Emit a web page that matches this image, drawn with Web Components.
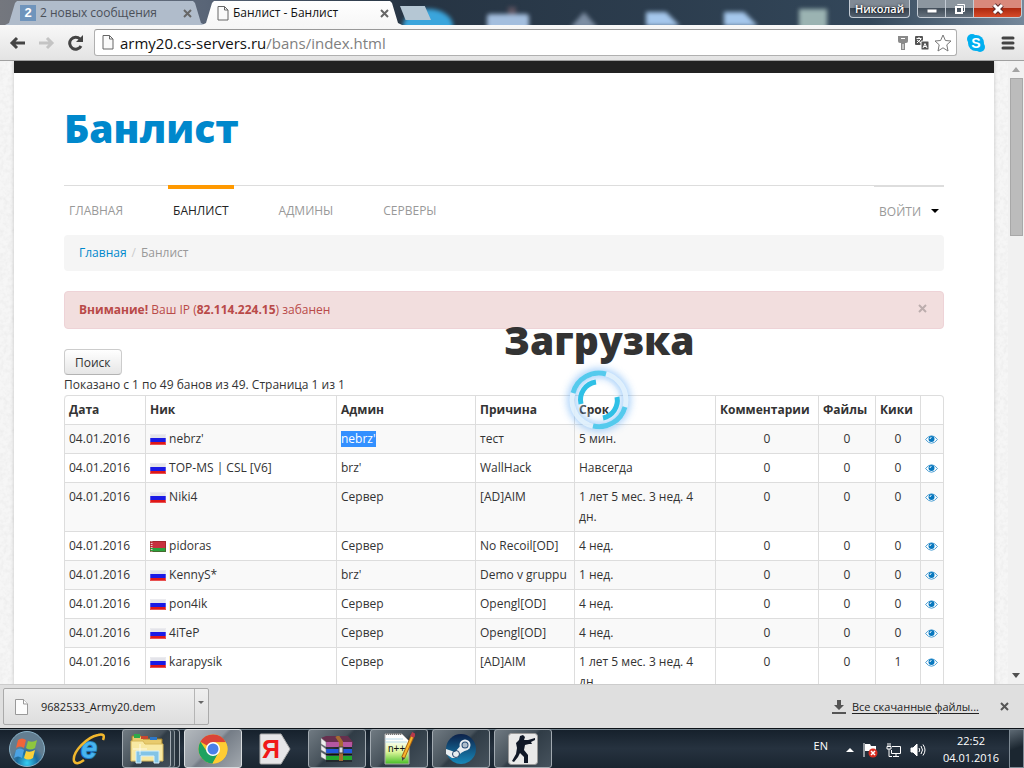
<!DOCTYPE html>
<html lang="ru">
<head>
<meta charset="utf-8">
<title>Банлист - Банлист</title>
<style>
    html, body { height: 100%; margin: 0; }
    body { font: 12px/20px "Open Sans", "Noto Sans", sans-serif; color: #333; overflow: hidden; }
</style>
</head>
<body>
<browser-window>
    <window-tabs slot="tabs">
        <browser-tab name="2 новых сообщения" icon="two"></browser-tab>
        <browser-tab name="Банлист - Банлист" icon="page" active></browser-tab>
    </window-tabs>
    <address-bar slot="bar" host="army20.cs-servers.ru" path="/bans/index.html"></address-bar>
    <scroll-view slot="view">
        <site-page>
            <site-header slot="header">Банлист</site-header>
            <site-nav slot="nav"></site-nav>
            <bread-crumbs slot="crumbs"></bread-crumbs>
            <site-alert slot="alert"><b>Внимание!</b> Ваш IP (<b>82.114.224.15</b>) забанен</site-alert>
            <ban-table></ban-table>
            <loading-box slot="loading">Загрузка</loading-box>
        </site-page>
    </scroll-view>
    <download-bar slot="downloads" file="9682533_Army20.dem"></download-bar>
    <task-bar slot="taskbar"></task-bar>
</browser-window>

<script>
const base = `
    :host, * { box-sizing: border-box; }
    button { font: inherit; color: inherit; background: none; border: 0; padding: 0; margin: 0; }
    a { color: #0088cc; text-decoration: none; }
    svg { display: block; flex: none; }
`;

// Registriert ein Element mit Template im Shadow Root
function define(name, html, setup){
    const template = document.createElement('template');
    customElements.define(name, class extends HTMLElement {
        constructor() {
            super();
            this._isInitialized = false;
        }

        connectedCallback(){
            if(this._isInitialized) return;
            this._isInitialized = true;
            template.innerHTML = html;
            let shadow = this.attachShadow({mode: "open"});
            shadow.append(template.content.cloneNode(true));
            let style = document.createElement('style');
            style.textContent = base;
            shadow.prepend(style);
            if(setup) setup(this, shadow);
        }
    });
}

const pageIcon = `
    <svg width="12" height="15" viewBox="0 0 12 15" fill="#fafafa" stroke="#666">
        <path d="M1 .5H7.500L11 4V14H1Z"/><path d="M7.500 .5V4H11" fill="none"/>
    </svg>`;
const closeIcon = `
    <svg width="9" height="9" viewBox="0 0 9 9" stroke="currentColor" stroke-width="2"><path d="M1 1 8 8M8 1 1 8"/></svg>`;

define('browser-window', `
    <style>
        :host { display: flex; flex-direction: column; height: 100vh; }
        main { flex: 1; min-height: 0; display: flex; background: #fff; }
    </style>
    <slot name="tabs"></slot>
    <slot name="bar"></slot>
    <main><slot name="view"></slot></main>
    <slot name="downloads"></slot>
    <slot name="taskbar"></slot>
`);

define('window-tabs', `
    <style>
        :host {
            display: flex; flex: none; height: 25px; padding-left: 5px; position: relative; z-index: 0; overflow: hidden;
            background: linear-gradient(90deg, #74777e, #596577 20%, #263443 40%, #2c3d4e 65%, #33475a 85%, #75889b);
        }
        .glass { position: absolute; z-index: -1; top: 0; left: 390px; }
        .new { width: 31px; height: 14px; margin-top: 6px; margin-left: 1px; background: #b5c7d4; clip-path: polygon(0 0, 80% 0, 100% 100%, 18% 100%); }
        .space { flex: 1; }
        .user { width: 61px; height: 18px; font-size: 11px; line-height: 17px; font-weight: 600; color: #fff; text-shadow: 0 0 3px #000; border: 1px solid #c3cbd4; border-top: 0; border-radius: 0 0 4px 4px; background: linear-gradient(#808a95 45%, #35414e 50%, #53606e); }
        .controls { display: flex; height: 18px; margin: 0 2px 0 7px; border: 1px solid #c3cbd4; border-top: 0; border-radius: 0 0 4px 4px; overflow: hidden; }
        .controls button { width: 28px; display: flex; align-items: center; justify-content: center; background: linear-gradient(#8c969f 45%, #414d59 50%, #65717d); border-right: 1px solid #c3cbd4; }
        .controls .close { width: 47px; border: 0; background: linear-gradient(#d9897b 45%, #ae2a10 50%, #d64a28); }
    </style>
    <svg class="glass" width="450" height="25" style="--b: blur(2px)">
        <g style="filter: var(--b)">
            <ellipse cx="38" cy="26" rx="25" ry="17" fill="#3aa5dc"/>
            <rect x="97" y="14" width="42" height="16" rx="3" fill="#a3bede"/>
            <rect x="118" y="7" width="8" height="7" fill="#5d5360"/>
            <path d="M180 28 194 12 208 28Z" fill="#7d8ea3"/>
            <path d="M256 12H276L290 26H256Z" fill="#a5c7ec"/>
            <path d="M334 12H354L368 26H334Z" fill="#a5c7ec"/>
            <rect x="409" y="9" width="28" height="20" fill="#9bb3b2"/>
        </g>
    </svg>
    <slot></slot>
    <button class="new" aria-label="Новая вкладка"></button>
    <span class="space"></span>
    <button class="user">Николай</button>
    <div class="controls">
        <button aria-label="Свернуть"><svg width="12" height="12"><rect x="1" y="6" width="10" height="4" fill="#fff" stroke="#4b5560"/></svg></button>
        <button aria-label="Развернуть"><svg width="12" height="12" fill="none" stroke="#fff"><path d="M3.500 2V1.500H10.500V8.500H9" /><rect x="2" y="4" width="6" height="6" stroke-width="2"/></svg></button>
        <button class="close" aria-label="Закрыть"><svg width="14" height="12"><path d="M3 2 11 10M11 2 3 10" stroke="#5b2b2b" stroke-width="5"/><path d="M3 2 11 10M11 2 3 10" stroke="#fff" stroke-width="3"/></svg></button>
    </div>
`);

define('browser-tab', `
    <style>
        :host { display: block; width: 200px; height: 25px; margin-right: -3px; padding-top: 1px; font-size: 12px; color: #4b5059; }
        .tab { height: 24px; display: flex; align-items: center; gap: 4px; padding: 0 13px 0 15px; background: #b0bccb; clip-path: polygon(0 100%, 2% 92%, 5% 8%, 6% 0, 94% 0, 95% 8%, 98% 92%, 100% 100%); }
        :host([active]) { color: #111; position: relative; }
        :host([active]) .tab { background: linear-gradient(#fff, #f7f7f7); }
        .name { flex: 1; white-space: nowrap; overflow: hidden; }
        .two { width: 16px; height: 16px; background: #6f94bc; color: #fff; font: bold 13px/16px "Liberation Sans", sans-serif; text-align: center; }
        button { color: #666; }
    </style>
    <div class="tab"><span class="icon"></span><span class="name"></span><button aria-label="Закрыть вкладку">${closeIcon}</button></div>
`, (el, shadow) => {
    shadow.querySelector('.name').textContent = el.getAttribute('name');
    shadow.querySelector('.icon').innerHTML = el.getAttribute('icon') == 'two' ? '<div class="two">2</div>' : pageIcon;
});

define('address-bar', `
    <style>
        :host { display: flex; align-items: center; flex: none; height: 36px; padding: 0 8px; background: linear-gradient(#f8f8f8, #e3e3e3); border-bottom: 1px solid #a0a0a0; }
        .nav { display: flex; gap: 12px; margin-right: 10px; }
        .field { flex: 1; height: 27px; display: flex; align-items: center; gap: 4px; padding: 0 4px 0 7px; background: #fff; border: 1px solid #b0b0b0; border-top-color: #999; border-radius: 3px; font-size: 15px; }
        .url { flex: 1; margin-left: 2px; color: #111; white-space: nowrap; }
        .url b { font-weight: 400; }
        .url span { color: #808080; }
        .skype { margin: 0 14px 0 9px; }
    </style>
    <div class="nav">
        <button aria-label="Назад"><svg width="18" height="18" fill="none" stroke="#444" stroke-width="3"><path d="M17 9H4M9 4 4 9 9 14"/></svg></button>
        <button aria-label="Вперёд"><svg width="18" height="18" fill="none" stroke="#c4c4c4" stroke-width="3"><path d="M1 9H14M9 4 14 9 9 14"/></svg></button>
        <button aria-label="Обновить"><svg width="16" height="18" fill="none" stroke="#444" stroke-width="3"><path d="M13 12A6 6 0 1 1 12 5"/><path d="M15 1V8H8Z" fill="#444" stroke="none"/></svg></button>
    </div>
    <div class="field">
        ${pageIcon}
        <span class="url"><b></b><span></span></span>
        <svg width="14" height="16"><path d="M2 1H12V6Q12 8 10 8H4Q2 8 2 6Z" fill="#8a8a8a"/><path d="M5 3.500H9" stroke="#fff"/><path d="M7 8V15" stroke="#8a8a8a" stroke-width="4"/><path d="M7 9V14" stroke="#fff"/></svg>
        <svg width="16" height="16" fill="none"><rect x="1" y="1" width="8" height="9" rx="1" fill="#555"/><rect x="7" y="6" width="8" height="9" rx="1" fill="#555" stroke="#fff"/><path d="M2.500 3.500H7.500M5 2V4M3 8 7 4M3 5 7 8M9 13 11 8.500 13 13M10 11.500H12" stroke="#fff"/></svg>
        <svg width="18" height="18" viewBox="0 0 18 18"><path d="M9 1 11.400 6.500 17 7 12.800 10.800 14 17 9 13.800 4 17 5.200 10.800 1 7 6.600 6.500Z" fill="#fff" stroke="#777"/></svg>
    </div>
    <button class="skype" aria-label="Skype"><svg width="20" height="20"><circle cx="10" cy="10" r="8" fill="#00aff0"/><circle cx="6" cy="6" r="5" fill="#00aff0"/><circle cx="14" cy="14" r="5" fill="#00aff0"/><text x="10" y="15" text-anchor="middle" font-family="Liberation Sans" font-weight="bold" font-size="14" fill="#fff">S</text></svg></button>
    <button aria-label="Меню"><svg width="16" height="14" stroke="#444" stroke-width="3" stroke-linecap="round"><path d="M3 2H13M3 7H13M3 12H13"/></svg></button>
`, (el, shadow) => {
    shadow.querySelector('.url b').textContent = el.getAttribute('host');
    shadow.querySelector('.url span').textContent = el.getAttribute('path');
});

define('scroll-view', `
    <style>
        :host { flex: 1; display: flex; min-width: 0; }
        .content { flex: 1; min-width: 0; overflow: hidden; background: #f6f6f6 url('data:image/svg+xml,<svg xmlns="http://www.w3.org/2000/svg" width="200" height="200"><filter id="n"><feTurbulence type="fractalNoise" baseFrequency=".25" numOctaves="3" stitchTiles="stitch"/><feColorMatrix values="0 0 0 0 .8 0 0 0 0 .8 0 0 0 0 .8 1.200 0 0 0 -.45"/></filter><rect width="200" height="200" filter="url(%23n)"/></svg>'); }
        .bar { width: 16px; display: flex; flex-direction: column; align-items: center; padding: 6px 0; background: #f1f1f1; }
        .thumb { width: 13px; height: 158px; margin-top: 6px; background: #bcbcbc; border: 1px solid #a8a8a8; }
        .space { flex: 1; }
    </style>
    <div class="content"><slot></slot></div>
    <div class="bar">
        <svg width="8" height="5"><path d="M0 5 4 0 8 5Z" fill="#a3a3a3"/></svg>
        <div class="thumb"></div>
        <span class="space"></span>
        <svg width="8" height="5"><path d="M0 0H8L4 5Z" fill="#505050"/></svg>
    </div>
`);

define('site-page', `
    <style>
        :host { display: block; position: relative; max-width: 980px; min-height: 100%; margin: 0 auto; padding: 0 50px; background: #fff; border-top: 12px solid #222; box-shadow: 0 0 4px rgba(0, 0, 0, .2); }
        .loading { position: absolute; top: 247px; left: 50%; }
    </style>
    <slot name="header"></slot>
    <slot name="nav"></slot>
    <slot name="crumbs"></slot>
    <slot name="alert"></slot>
    <slot></slot>
    <div class="loading"><slot name="loading"></slot></div>
`);

define('site-header', `
    <style>
        :host { display: block; padding: 35px 0 37px; }
        h1 { margin: 0; font-size: 39px; line-height: 40px; font-weight: 800; }
    </style>
    <h1><a href="#"><slot></slot></a></h1>
`);

define('site-nav', `
    <style>
        :host { display: flex; justify-content: space-between; border-top: 1px solid #ddd; height: 50px; }
        nav { display: flex; gap: 40px; }
        a, button { margin-top: -1px; padding: 12px 5px 0; border-top: 4px solid transparent; color: #999; line-height: 20px; white-space: nowrap; }
        a.active { color: #222; border-color: #ff9900; }
        button { display: flex; align-items: flex-start; gap: 10px; border-top: 2px solid #ddd; height: 40px; padding-top: 15px; }
        svg { margin-top: 7px; }
    </style>
    <nav>
        <a href="#">ГЛАВНАЯ</a>
        <a href="#" class="active">БАНЛИСТ</a>
        <a href="#">АДМИНЫ</a>
        <a href="#">СЕРВЕРЫ</a>
    </nav>
    <button>ВОЙТИ <svg width="8" height="4"><path d="M0 0H8L4 4Z"/></svg></button>
`);

define('bread-crumbs', `
    <style>
        :host { display: flex; gap: 5px; padding: 8px 15px; margin-bottom: 20px; background: #f5f5f5; border-radius: 4px; color: #999; }
        i { font-style: normal; color: #ccc; }
    </style>
    <a href="#">Главная</a><i>/</i><span>Банлист</span>
`);

define('site-alert', `
    <style>
        :host { display: flex; justify-content: space-between; padding: 8px 14px; margin-bottom: 20px; background: #f2dede; border: 1px solid #eed3d7; border-radius: 4px; color: #b94a48; }
        button { display: flex; align-items: center; height: 16px; color: #bcadad; padding-right: 2px; }
    </style>
    <span><slot></slot></span><button aria-label="Закрыть">${closeIcon}</button>
`);

define('loading-box', `
    <style>
        :host { display: flex; flex-direction: column; align-items: center; font-size: 39px; line-height: 40px; font-weight: 800; }
    </style>
    <slot></slot>
    <svg width="80" height="80" viewBox="-40 -40 80 80" fill="none">
        <circle r="27" stroke="#5ca8f5" stroke-width="7" opacity=".7" style="filter:blur(4px)"/>
        <circle r="27" stroke="#e9f5fd" stroke-width="5" opacity=".8"/>
        <path d="M-26 -7A27 27 0 0 1 7 -26M26 7A27 27 0 0 1 -6 26" stroke="#55caed" stroke-width="5"/>
        <circle r="18" stroke="#fff" stroke-width="5" opacity=".2"/>
        <path d="M-18 4A18 18 0 0 1 -3 -18M18 -3A18 18 0 0 1 4 18" stroke="#2fc0e6" stroke-width="5"/>
    </svg>
`);

// Ник, админ, причина, срок, кики, флаг
const bans = [
    ["nebrz'", "nebrz'", 'тест', '5 мин.', 0],
    ['TOP-MS | CSL [V6]', "brz'", 'WallHack', 'Навсегда', 0],
    ['Niki4', 'Сервер', '[AD]AIM', '1 лет 5 мес. 3 нед. 4 дн.', 0],
    ['pidoras', 'Сервер', 'No Recoil[OD]', '4 нед.', 0, 'by'],
    ['KennyS*', "brz'", 'Demo v gruppu', '1 нед.', 0],
    ['pon4ik', 'Сервер', 'Opengl[OD]', '4 нед.', 0],
    ['4iTeP', 'Сервер', 'Opengl[OD]', '4 нед.', 0],
    ['karapysik', 'Сервер', '[AD]AIM', '1 лет 5 мес. 3 нед. 4 дн.', 1]
];

define('country-flag', `
    <style>
        :host { display: inline-block; width: 16px; height: 11px; vertical-align: -2px; }
    </style>
    <svg width="16" height="11"></svg>
`, (el, shadow) => {
    shadow.querySelector('svg').innerHTML = el.getAttribute('code') == 'by'
        ? '<rect width="16" height="11" fill="#c8313e"/><rect y="7" width="16" height="4" fill="#2ba23c"/><path d="M1.500 0V11" stroke="#f3c9c9" stroke-dasharray="1 1" stroke-width="2"/><path d="M.5 .5H15.500V10.500H.5Z" fill="none" stroke="#701818" opacity=".4"/>'
        : '<rect width="16" height="4" fill="#e4e4ea"/><rect y="4" width="16" height="4" fill="#1a1ae6"/><rect y="8" width="16" height="3" fill="#e01818"/><path d="M.5 .5H15.500V10.500H.5Z" fill="none" stroke="#fff" opacity=".25"/>';
});

define('ban-table', `
    <style>
        :host { display: block; }
        .search { display: block; height: 26px; padding: 3px 10px 2px; border: 1px solid #ccc; border-bottom-color: #b3b3b3; border-radius: 4px; background: linear-gradient(#fff, #e6e6e6); }
        table { width: 100%; table-layout: fixed; border-collapse: separate; border-spacing: 0; border: 1px solid #ddd; border-left: 0; border-radius: 4px; }
        th, td { padding: 4px 4px; text-align: left; vertical-align: top; border-left: 1px solid #ddd; white-space: nowrap; }
        td:nth-child(5) { white-space: normal; }
        td { border-top: 1px solid #ddd; }
        th:first-child { border-top-left-radius: 4px; }
        .n { text-align: center; }
        tbody tr:nth-child(odd) td { background: #f9f9f9; }
        mark { display: inline-block; line-height: 16px; background: #3390ff; color: #fff; }
        .eye { display: flex; height: 20px; align-items: center; }
        .date { width: 81px; } .nick { width: 191px; } .admin { width: 139px; } .reason { width: 99px; } .term { width: 141px; }
        .comments { width: 103px; } .files { width: 57px; } .kicks { width: 45px; }
    </style>
    <button class="search">Поиск</button>
    <div>Показано с 1 по 49 банов из 49. Страница 1 из 1</div>
    <table>
        <thead><tr>
            <th class="date">Дата</th><th class="nick">Ник</th><th class="admin">Админ</th><th class="reason">Причина</th><th class="term">Срок</th>
            <th class="comments">Комментарии</th><th class="files">Файлы</th><th class="kicks">Кики</th><th></th>
        </tr></thead>
        <tbody></tbody>
    </table>
`, (el, shadow) => {
    shadow.querySelector('tbody').innerHTML = bans.map(([nick, admin, reason, term, kicks, flag], i) => `
        <tr>
            <td>04.01.2016</td>
            <td><country-flag code="${flag || 'ru'}"></country-flag> ${nick}</td>
            <td>${i == 0 ? '<mark>' + admin + '</mark>' : admin}</td>
            <td>${reason}</td>
            <td>${term}</td>
            <td class="n">0</td><td class="n">0</td><td class="n">${kicks}</td>
            <td><a class="eye" href="#" aria-label="Подробнее"><svg width="13" height="9" viewBox="0 0 13 9"><path d="M.5 4.500Q6.500 -3 12.500 4.500Q6.500 12 .5 4.500Z" fill="#fff" stroke="#4d9fd4"/><circle cx="6.500" cy="4" r="3" fill="#0878bf"/><path d="M5 4Q5 2.500 6.500 2.500" stroke="#fff" fill="none"/></svg></a></td>
        </tr>`).join('');
});

define('download-bar', `
    <style>
        :host { display: flex; align-items: center; flex: none; height: 44px; padding: 0 15px 0 3px; background: #dfdfdf; border-top: 1px solid #ccc; color: #222; font-size: 11px; }
        .file { display: flex; align-items: center; width: 206px; height: 37px; background: linear-gradient(#efefef, #dedede); border: 1px solid #aaa; border-radius: 2px; }
        .name { flex: 1; display: flex; align-items: center; gap: 13px; padding-left: 11px; height: 100%; }
        .more { width: 14px; height: 100%; padding-left: 3px; border-left: 1px solid #b5b5b5; }
        .space { flex: 1; }
        .all { display: flex; align-items: center; gap: 6px; margin-right: 21px; }
        .all a { color: #222; text-decoration: underline; text-underline-offset: 2px; }
        .x { color: #555; }
    </style>
    <div class="file">
        <button class="name"><svg width="13" height="16" fill="#fcfcfc" stroke="#999"><path d="M.5 .5H8.500L12.500 5V15.500H.5Z"/><path d="M8.500 .5V5H12.500"/></svg><span></span></button>
        <button class="more" aria-label="Меню файла"><svg width="6" height="11"><path d="M0 0H6L3 3Z" fill="#666"/></svg></button>
    </div>
    <span class="space"></span>
    <div class="all">
        <svg width="14" height="14" fill="#555"><path d="M5 0H9V5H12L7 10 2 5H5ZM0 12H14V14H0Z"/></svg>
        <a href="#">Все скачанные файлы...</a>
    </div>
    <button class="x" aria-label="Закрыть">${closeIcon}</button>
`, (el, shadow) => {
    shadow.querySelector('.name span').textContent = el.getAttribute('file');
});

const apps = {
    'Internet Explorer': `<svg width="34" height="36" viewBox="0 0 34 36"><text x="17" y="27" text-anchor="middle" font-family="Liberation Sans" font-weight="bold" font-style="italic" font-size="29" fill="#48b4ee" stroke="#1e7cc4" stroke-width="2" paint-order="stroke">e</text><path d="M31 9Q34 2 26 4C15 6 0 21 2 30Q4 35 12 29" fill="none" stroke="#f1b72d" stroke-width="2.500"/></svg>`,
    'Проводник': `<svg width="34" height="32" viewBox="0 0 34 32"><path d="M2 3H11L13 6H32V27H2Z" fill="#e8cb6d" stroke="#9c7b25"/><path d="M4 1H10V5H4Z" fill="#2da84a"/><path d="M11 3H18V6H11Z" fill="#c8472e"/><path d="M20 4H27V7H20Z" fill="#2d77c8"/><path d="M1 8H13L15 11H33V28H1Z" fill="#f8e9a3" stroke="#d7b85a"/><path d="M6 18H29V30H24V23H11V30H6Z" fill="#83c4e6" stroke="#d4effb"/><path d="M3 16H17M10 11V22" stroke="#fff" opacity=".7"/></svg>`,
    'Chrome': `<svg width="30" height="30" viewBox="-15 -15 30 30"><circle r="14.500" fill="#f8c72b"/><path d="M0 0 -12.600 -7.200A14.500 14.500 0 0 1 12.800 -6.800L0 -6.500Z" fill="#db4437"/><path d="M-12.600 -7.200A14.500 14.500 0 0 0 -.5 14.500L5.500 3.500-5.500 3.500Z" fill="#1da260"/><path d="M12.800 -6.800H0V0L5.800 3.500-.5 14.500A14.500 14.500 0 0 0 12.800 -6.800Z" fill="#fc3"/><circle r="7" fill="#fff"/><circle r="5.500" fill="#4a80e8"/></svg>`,
    'Яндекс': `<svg width="32" height="32" viewBox="0 0 32 32"><path d="M2 1H22L31 16 22 31H2Q1 31 1 30V2Q1 1 2 1Z" fill="#e6e6e8" stroke="#aaa"/><text x="12" y="25" text-anchor="middle" font-family="Liberation Sans" font-weight="bold" font-size="25" fill="#f01818">Я</text></svg>`,
    'WinRAR': `<svg width="34" height="26" viewBox="0 0 34 26"><path d="M1 2 6 0H28L33 6V9H6Z" fill="#67304e"/><path d="M6 6H32V11H6Z" fill="#b557a0"/><path d="M6 13H32V17H6Z" fill="#2158dc"/><path d="M6 20H32V24H6Z" fill="#23a82e"/><path d="M1 2 6 6V11L1 8ZM1 9 6 13V17L1 14ZM1 16 6 19V24L1 21Z" fill="#eee" stroke="#777" stroke-width=".5"/><path d="M6 12H32M6 18.500H32M6 25H32" stroke="#111"/><path d="M17 0 21 6V25" fill="none" stroke="#a56a32" stroke-width="4"/><rect x="19" y="11" width="4" height="6" fill="#ddd" stroke="#444"/></svg>`,
    'Notepad++': `<svg width="32" height="34" viewBox="0 0 32 34"><defs><linearGradient id="g" x2="0" y2="1"><stop offset=".2" stop-color="#fff"/><stop offset=".6" stop-color="#dcf59a"/><stop offset="1" stop-color="#45bd25"/></linearGradient></defs><path d="M2 2H19L26 9V32H2Z" fill="url(#g)" stroke="#aaa"/><path d="M2 7H20M2 10H24" stroke="#b8dae8"/><path d="M3 2H19" stroke="#777" stroke-width="2" stroke-dasharray="1 1"/><text x="5" y="20" font-family="Liberation Sans" font-size="10" fill="#111">n++</text><path d="M30 3 20 26" stroke="#a86112" stroke-width="4"/><path d="M30 3 20 26" stroke="#f8b62d" stroke-width="2"/><path d="M31 1 29 5" stroke="#b8394a" stroke-width="4"/><path d="M19 25 19 29 22 26Z" fill="#444"/></svg>`,
    'Steam': `<svg width="30" height="30" viewBox="0 0 30 30"><defs><linearGradient id="s" x2="0" y2="1"><stop stop-color="#0d2149"/><stop offset="1" stop-color="#1889ba"/></linearGradient></defs><circle cx="15" cy="15" r="15" fill="url(#s)"/><path d="M0 15 9 18 16 10 24 14 15 19 11 24H6L0 20Z" fill="#e9edf0"/><circle cx="19" cy="11" r="4.500" fill="#274c75" stroke="#e9edf0" stroke-width="2"/><circle cx="19" cy="11" r="2.500" fill="#aebdcb"/><circle cx="10" cy="20" r="3.500" fill="none" stroke="#234169"/></svg>`,
    'Counter-Strike': `<svg width="30" height="32" viewBox="0 0 30 32"><rect x=".5" y=".5" width="29" height="31" rx="3" fill="#e9e9e9" stroke="#999"/><path d="M12 3 15 2 17 4 16 7 20 7 27 5V7L23 9 24 11H21L17 12 16 17 20 22 20 30H16L16 24 12 20 10 24 6 29 4 28 8 21 9 15 8 10 11 7Z" fill="#101827"/></svg>`
};

define('task-bar', `
    <style>
        :host { display: flex; flex: none; height: 40px; background: linear-gradient(#15202b, #26323f 50%, #1a2530); border-top: 1px solid #0c1218; box-shadow: inset 0 1px #71818c; color: #fff; }
        .start { width: 58px; display: flex; justify-content: center; align-items: center; margin-right: 2px; padding-right: 4px; }
        .apps { display: flex; gap: 4px; }
        .apps button { width: 58px; display: flex; align-items: center; justify-content: center; border: 1px solid transparent; border-radius: 3px; }
        .apps .open { border-color: #a2aab1; background: linear-gradient(135deg, #707a82, #47525b 45%, #303c46 50%, #46525d); }
        .apps .current { background: linear-gradient(135deg, #b3b8bd, #9198a0 45%, #747c86 50%, #a2a8ae); border-color: #d8dcdf; }
        .apps .stack { padding-right: 9px; box-shadow: inset -4px 0 #28333d, inset -5px 0 #8a949b, inset -8px 0 #38444e, inset -9px 0 #a2aab1; }
        .space { flex: 1; }
        .tray { display: flex; align-items: center; gap: 8px; margin-right: 16px; padding-bottom: 2px; }
        .tray .lang { margin-right: 10px; padding-bottom: 4px; font-size: 11px; }
        .tray svg { margin-top: 4px; }
        time { display: flex; flex-direction: column; align-items: center; justify-content: center; width: 58px; line-height: 17px; font-size: 11px; margin-right: 9px; }
        .desktop { width: 15px; border: 1px solid #7e8a94; background: linear-gradient(160deg, #5d6973, #1b2630 50%); }
    </style>
    <button class="start" aria-label="Пуск"><svg width="38" height="38" viewBox="0 0 38 38"><defs><radialGradient id="o" cy=".9"><stop stop-color="#35d0f4"/><stop offset=".6" stop-color="#1c6b9e"/><stop offset="1" stop-color="#637e91"/></radialGradient></defs><circle cx="19" cy="19" r="17.500" fill="url(#o)" stroke="#8ab2c8"/><path d="M10 10Q14 7 18 10L16 18Q12 15 8 18Z" fill="#f0653a"/><path d="M20 11Q25 13 29 10L27 18Q22 21 18 18Z" fill="#8ec63f"/><path d="M8 20Q12 17 16 20L14 28Q10 25 6 28Z" fill="#4ba3e5"/><path d="M18 21Q22 23 27 20L25 28Q20 31 16 28Z" fill="#fbd13a"/></svg></button>
    <div class="apps"></div>
    <span class="space"></span>
    <div class="tray">
        <span class="lang">EN</span>
        <svg width="8" height="4"><path d="M0 4 4 0 8 4Z" fill="#fff"/></svg>
        <svg width="16" height="16"><path d="M2 1V15" stroke="#fff" stroke-width="1"/><path d="M3 2H8L9 4H14V9H3Z" fill="#fff"/><circle cx="11" cy="11" r="4.500" fill="#d92c20"/><path d="M9 9 13 13M13 9 9 13" stroke="#fff" stroke-width="1.500"/></svg>
        <svg width="16" height="16" fill="none" stroke="#fff"><path d="M6 4.500H14.500V11.500H5.500V8M7 14.500H13M10 12V14M1 4.500H5V7H1ZM2 1V4M4 1V4M3 7V14.500H6"/></svg>
        <svg width="16" height="16" fill="none" stroke="#fff"><path d="M1 6H3L7 2V14L3 10H1Z" fill="#fff"/><path d="M9 6Q10.500 8 9 10M11 4Q14 8 11 12M13 2.500Q17 8 13 13.500"/></svg>
    </div>
    <time><span>22:52</span><span>04.01.2016</span></time>
    <button class="desktop" aria-label="Показать рабочий стол"></button>
`, (el, shadow) => {
    const look = {'Проводник': 'open stack', 'Chrome': 'open current', 'Internet Explorer': '', 'Яндекс': ''};
    shadow.querySelector('.apps').innerHTML = Object.keys(apps).map(name =>
        `<button class="${look[name] ?? 'open'}" aria-label="${name}">${apps[name]}</button>`).join('');
});
</script>
</body>
</html>
